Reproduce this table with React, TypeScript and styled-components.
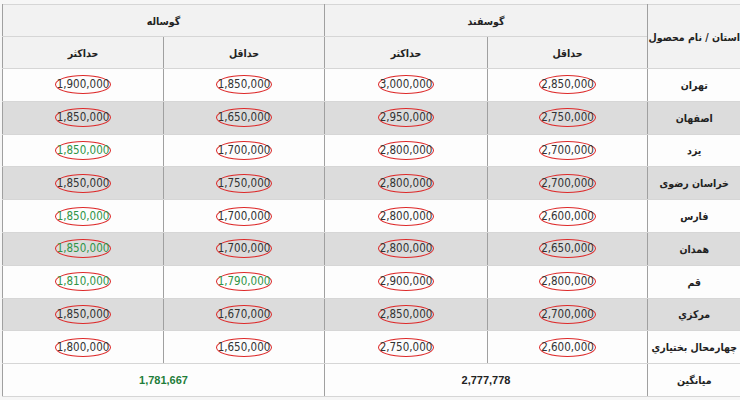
import styled, { createGlobalStyle } from 'styled-components';

// Type Declarations
type Price = {
  value: string;
  green?: boolean;
};

type Row = {
  province: string;
  sheepMin: Price;
  sheepMax: Price;
  calfMin: Price;
  calfMax: Price;
};

// Data
const rows: Row[] = [
  { province: 'تهران', sheepMin: { value: '2,850,000' }, sheepMax: { value: '3,000,000' }, calfMin: { value: '1,850,000' }, calfMax: { value: '1,900,000' } },
  { province: 'اصفهان', sheepMin: { value: '2,750,000' }, sheepMax: { value: '2,950,000' }, calfMin: { value: '1,650,000' }, calfMax: { value: '1,850,000' } },
  { province: 'یزد', sheepMin: { value: '2,700,000' }, sheepMax: { value: '2,800,000' }, calfMin: { value: '1,700,000' }, calfMax: { value: '1,850,000', green: true } },
  { province: 'خراسان رضوی', sheepMin: { value: '2,700,000' }, sheepMax: { value: '2,800,000' }, calfMin: { value: '1,750,000' }, calfMax: { value: '1,850,000' } },
  { province: 'فارس', sheepMin: { value: '2,600,000' }, sheepMax: { value: '2,800,000' }, calfMin: { value: '1,700,000' }, calfMax: { value: '1,850,000', green: true } },
  { province: 'همدان', sheepMin: { value: '2,650,000' }, sheepMax: { value: '2,800,000' }, calfMin: { value: '1,700,000' }, calfMax: { value: '1,850,000', green: true } },
  { province: 'قم', sheepMin: { value: '2,800,000' }, sheepMax: { value: '2,900,000' }, calfMin: { value: '1,790,000', green: true }, calfMax: { value: '1,810,000', green: true } },
  { province: 'مرکزي', sheepMin: { value: '2,700,000' }, sheepMax: { value: '2,850,000' }, calfMin: { value: '1,670,000' }, calfMax: { value: '1,850,000' } },
  { province: 'چهارمحال بختياري', sheepMin: { value: '2,600,000' }, sheepMax: { value: '2,750,000' }, calfMin: { value: '1,650,000' }, calfMax: { value: '1,800,000' } },
];

// Global Styles
const GlobalStyle = createGlobalStyle`
  html, body {
    margin: 0;
    padding: 0;
    background: #f6f6f6;
  }
  body {
    font-family: 'DejaVu Sans', Tahoma, sans-serif;
  }
`;

// Wrapper CSS Element
const Wrapper = styled.div`
  padding: 4px 0 0 2px;
`;

// Table CSS Element
const Table = styled.table`
  direction: rtl;
  width: 738px;
  border-collapse: collapse;
  table-layout: fixed;
  border-top: 1px solid #dcdcdc;
  border-left: 1px solid #9c9c9c;
`;

// Header Cell CSS Element
const HeadCell = styled.th`
  background: #f2f2f2;
  color: #222;
  font-family: 'DejaVu Sans Condensed', 'DejaVu Sans', sans-serif;
  font-size: 10.5px;
  font-weight: bold;
  text-align: center;
  white-space: nowrap;
  padding: 0;
  height: 31px;
  border-top: 1px solid #d6d6d6;
  border-bottom: 1px solid #d6d6d6;
  border-left: 1px solid #a0a0a0;
`;

// Body Cell CSS Element
const Cell = styled.td<{ $shade?: boolean }>`
  background: ${(p) => (p.$shade ? '#dcdcdc' : '#fdfdfd')};
  text-align: center;
  white-space: nowrap;
  padding: 0;
  height: 31.8px;
  border-top: 1px solid #d6d6d6;
  border-bottom: 1px solid #d6d6d6;
  border-left: 1px solid #a0a0a0;
  font-family: 'DejaVu Sans Condensed', 'DejaVu Sans', sans-serif;
  font-size: 11.5px;
  color: #333;
`;

// Province Name CSS Element
const Province = styled(Cell)`
  font-size: 10.5px;
  font-weight: bold;
  color: #222;
`;

// Circled Price CSS Element
const Circled = styled.span<{ $green?: boolean }>`
  display: inline-block;
  direction: ltr;
  height: 17px;
  line-height: 17px;
  padding: 0 1px;
  border: 1px solid #dd2a2a;
  border-radius: 50%;
  color: ${(p) => (p.$green ? '#2f9447' : '#333')};
`;

// Average Value CSS Element
const Average = styled.span<{ $green?: boolean }>`
  direction: ltr;
  font-family: 'Liberation Sans', Arial, sans-serif;
  font-weight: bold;
  font-size: 11px;
  color: ${(p) => (p.$green ? '#1f7d3a' : '#222')};
`;

const PriceCell = ({ price, shade }: { price: Price; shade: boolean }) => (
  <Cell $shade={shade}>
    <Circled $green={price.green}>{price.value}</Circled>
  </Cell>
);

// App React Component
const App = () => {
  return (
    <>
      <GlobalStyle />
      <Wrapper>
        <Table>
          <colgroup>
            <col style={{ width: 93 }} />
            <col style={{ width: 160 }} />
            <col style={{ width: 163 }} />
            <col style={{ width: 161 }} />
            <col style={{ width: 161 }} />
          </colgroup>
          <thead>
            <tr>
              <HeadCell rowSpan={2}>استان / نام محصول</HeadCell>
              <HeadCell colSpan={2}>گوسفند</HeadCell>
              <HeadCell colSpan={2}>گوساله</HeadCell>
            </tr>
            <tr>
              <HeadCell>حداقل</HeadCell>
              <HeadCell>حداکثر</HeadCell>
              <HeadCell>حداقل</HeadCell>
              <HeadCell>حداکثر</HeadCell>
            </tr>
          </thead>
          <tbody>
            {rows.map((row, i) => (
              <tr key={row.province}>
                <Province $shade={i % 2 === 1}>{row.province}</Province>
                <PriceCell price={row.sheepMin} shade={i % 2 === 1} />
                <PriceCell price={row.sheepMax} shade={i % 2 === 1} />
                <PriceCell price={row.calfMin} shade={i % 2 === 1} />
                <PriceCell price={row.calfMax} shade={i % 2 === 1} />
              </tr>
            ))}
            <tr>
              <Province>میانگین</Province>
              <Cell colSpan={2}>
                <Average>2,777,778</Average>
              </Cell>
              <Cell colSpan={2}>
                <Average $green>1,781,667</Average>
              </Cell>
            </tr>
          </tbody>
        </Table>
      </Wrapper>
    </>
  );
};

// Default Export App React Component
export default App;
